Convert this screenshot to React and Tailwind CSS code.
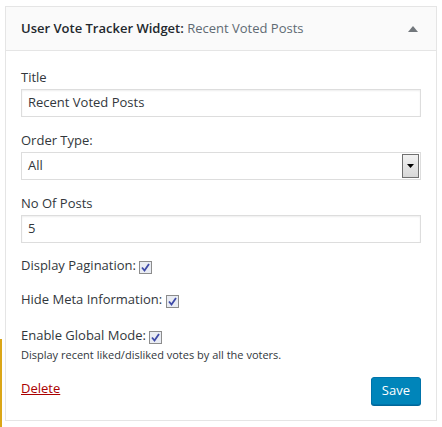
import React from 'react';

const font = { fontFamily: '"Open Sans", "Noto Sans", sans-serif' };

const Checkbox = () => (
  <span className="inline-flex items-center justify-center w-[13px] h-[13px] border border-[#8c8c8c] bg-[#e9ecf3] align-[-2px]">
    <svg width="9" height="9" viewBox="0 0 9 9">
      <path d="M1 4.5 L3.5 7.5 L8 1" fill="none" stroke="#3e4aa8" strokeWidth="1.8" />
    </svg>
  </span>
);

const Field = ({ label, value }) => (
  <div>
    <div className="text-[13px] text-[#32373c] leading-[18px] mb-[3px]">{label}</div>
    <div className="h-[28px] border border-[#ddd] shadow-[inset_0_1px_2px_rgba(0,0,0,0.07)] px-[6px] flex items-center text-[13px] text-[#32373c]">
      {value}
    </div>
  </div>
);

export default function App() {
  return (
    <div className="relative w-[442px] h-[427px] bg-[#fff]" style={font}>
      <div className="absolute left-0 top-[333px] w-[2px] h-[94px] bg-[#dba617]" />
      <div className="ml-[5px] mt-[6px] w-[432px] border border-[#e5e5e5] bg-white">
        <div className="h-[44px] bg-[#fafafa] border-b border-[#e5e5e5] flex items-center justify-between pl-[15px] pr-[18px]">
          <div className="text-[13px] font-semibold text-[#23282d]">
            User Vote Tracker Widget: <span className="font-normal text-[#606a73]">Recent Voted Posts</span>
          </div>
          <svg width="10" height="6" viewBox="0 0 10 6">
            <path d="M0 6 L5 0 L10 6 Z" fill="#72777c" />
          </svg>
        </div>
        <div className="px-[15px] pt-[17px] pb-[15px]">
          <Field label="Title" value="Recent Voted Posts" />
          <div className="mt-[14px]">
            <div className="text-[13px] text-[#32373c] leading-[18px] mb-[3px]">Order Type:</div>
            <div className="h-[28px] border border-[#ddd] flex items-center justify-between pl-[6px] pr-[1px] text-[13px] text-[#32373c]">
              <span>All</span>
              <span className="w-[17px] h-[24px] border border-[#707070] bg-gradient-to-b from-[#f2f2f2] to-[#d8d8d8] flex items-center justify-center">
                <svg width="7" height="4" viewBox="0 0 7 4"><path d="M0 0 L7 0 L3.5 4 Z" fill="#000" /></svg>
              </span>
            </div>
          </div>
          <div className="mt-[14px]">
            <Field label="No Of Posts" value="5" />
          </div>
          <div className="mt-[13px] text-[13px] text-[#32373c] leading-[18px]">
            Display Pagination: <Checkbox />
          </div>
          <div className="mt-[16px] text-[13px] text-[#32373c] leading-[18px]">
            Hide Meta Information: <Checkbox />
          </div>
          <div className="mt-[18px] text-[13px] text-[#32373c] leading-[18px]">
            Enable Global Mode: <Checkbox />
          </div>
          <div className="text-[11px] text-[#32373c] leading-[16px] mt-[3px]">
            Display recent liked/disliked votes by all the voters.
          </div>
          <div className="mt-[14px] flex items-start justify-between">
            <a className="text-[13px] text-[#a00] underline mt-[2px]">Delete</a>
            <button className="h-[28px] px-[10px] rounded-[3px] bg-[#0085ba] border border-[#0073aa] shadow-[0_1px_0_#006799] text-white text-[13px]">
              Save
            </button>
          </div>
        </div>
      </div>
    </div>
  );
}
